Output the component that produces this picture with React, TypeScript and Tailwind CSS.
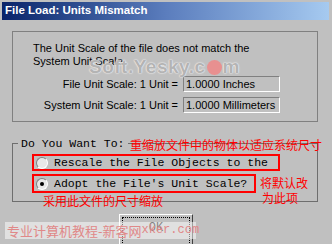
const sans = "font-['Liberation_Sans',Arial,sans-serif]";
const mono = "font-['Liberation_Mono','Courier_New',monospace]";
const cjk = "font-['Noto_Sans_CJK_SC',sans-serif]";

function UnitRow({ label, value }: { label: string; value: string }) {
  return (
    <div className="flex items-center">
      <span className="w-[170px] pr-[5px] text-right">{label}</span>
      <div className="h-[16px] w-[97px] border border-t-[#808080] border-l-[#808080] border-r-white border-b-white pl-[2px] leading-[14px]">
        {value}
      </div>
    </div>
  );
}

function Radio({ checked }: { checked?: boolean }) {
  return (
    <span className="flex size-[12px] shrink-0 items-center justify-center rounded-full border border-t-[#808080] border-l-[#808080] border-r-white border-b-white bg-[#e8e8e8]">
      {checked && <span className="size-[4px] rounded-full bg-black" />}
    </span>
  );
}

export default function App() {
  return (
    <div className={`relative h-[244px] w-[332px] overflow-hidden bg-[#c0c0c0] px-[2px] pt-[2px] text-black ${sans}`}>
      {/* barra de título */}
      <div className="flex h-[18px] w-[327px] items-center bg-gradient-to-r from-[#0a246a] via-[#5b7dbd] to-[#a6caf0] pl-[3px] text-[11.5px] font-bold text-white">
        File Load: Units Mismatch
      </div>

      {/* mensaje */}
      <div className="ml-[10px] mt-[11px] h-[91px] w-[306px] border border-[#808080] pl-[20px] pt-[10px] text-[11px] leading-[13px]">
        <p>The Unit Scale of the file does not match the</p>
        <p>System Unit Scale.</p>
        <div className="-ml-[20px] mt-[8px] flex flex-col gap-[5px]">
          <UnitRow label="File Unit Scale: 1 Unit =" value="1.0000 Inches" />
          <UnitRow label="System Unit Scale: 1 Unit =" value="1.0000 Millimeters" />
        </div>
      </div>

      {/* opciones */}
      <div className={`relative ml-[10px] mt-[21px] h-[59px] w-[306px] border border-[#6e6e6e] pl-[19px] pt-[10px] text-[11.5px] whitespace-nowrap ${mono}`}>
        <span className="absolute -top-[8px] left-[5px] bg-[#c0c0c0] px-[3px] text-[11.5px] leading-[15px]">
          Do You Want To:
        </span>
        <div className="flex h-[17px] w-[248px] items-center gap-[6px] border-2 border-[#ff0000] pl-[2px]">
          <Radio />
          <span>Rescale the File Objects to the</span>
        </div>
        <div className="mt-[3px] flex h-[19px] w-[224px] items-center gap-[6px] border-2 border-[#ff0000] pl-[2px]">
          <Radio checked />
          <span>Adopt the File's Unit Scale?</span>
        </div>
      </div>

      {/* botón */}
      <div className="ml-[117px] mt-[12px] h-[34px] w-[74px] border border-t-white border-l-white border-r-[#404040] border-b-[#404040] p-[2px]">
        <div className={`h-full border border-dotted border-black pt-[1px] text-center text-[12px] ${mono}`}>
          OK
        </div>
      </div>

      {/* anotaciones en rojo */}
      <span className={`absolute left-[130px] top-[137px] whitespace-nowrap text-[12px] leading-[16px] text-[#ff0000] ${cjk}`}>
        重缩放文件中的物体以适应系统尺寸
      </span>
      <span className={`absolute left-[43px] top-[193px] whitespace-nowrap text-[12px] leading-[16px] text-[#ff0000] ${cjk}`}>
        采用此文件的尺寸缩放
      </span>
      <span className={`absolute left-[260px] top-[175px] whitespace-nowrap text-[12px] leading-[15px] text-[#ff0000] ${cjk}`}>
        将默认改
        <br />
        <span className="pl-[2px]">为此项</span>
      </span>

      {/* marcas de agua */}
      <span className="absolute left-[89px] top-[53px] whitespace-nowrap text-[19px] font-bold tracking-[0.5px] text-[#b4b4b4] [text-shadow:0_0_1px_#fff,0_0_2px_#fff]">
        Soft.Yesky.c
        <span className="mx-[1px] inline-block size-[15px] translate-y-[2px] rounded-full bg-[#e89090]" />
        m
      </span>
      <div className={`absolute left-[5px] top-[222px] flex h-[17px] w-[191px] items-center whitespace-nowrap bg-white/50 pl-[2px] text-[13px] leading-[17px] text-[#e08888] ${cjk}`}>
        专业计算机教程-新客网<span className={`${mono} text-[12px]`}>xker.com</span>
      </div>
    </div>
  );
}
